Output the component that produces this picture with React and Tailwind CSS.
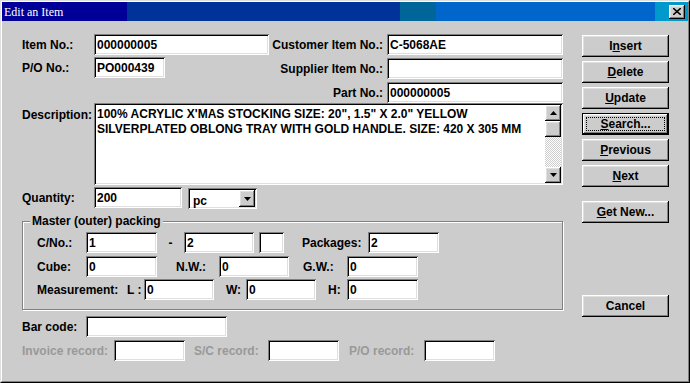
import React from 'react';

// Win95-style bevels, reused across controls
const SUNKEN = 'shadow-[inset_1px_1px_0_#808080,inset_-1px_-1px_0_#ffffff,inset_2px_2px_0_#000000,inset_-2px_-2px_0_#dfdfdf]';
const RAISED = 'shadow-[inset_-1px_-1px_0_#000000,inset_1px_1px_0_#ffffff,inset_-2px_-2px_0_#808080,inset_2px_2px_0_#dfdfdf]';

function Label({ w, children, className = '' }) {
  return (
    <span className={`shrink-0 text-[12px] font-bold leading-none whitespace-nowrap ${w} ${className}`}>
      {children}
    </span>
  );
}

function Field({ w, value = '' }) {
  return (
    <div className={`shrink-0 h-[21px] bg-white ${SUNKEN} flex items-center pl-[3px] text-[12px] font-bold leading-none text-black ${w}`}>
      {value}
    </div>
  );
}

function Arrow({ down }) {
  return (
    <svg width="7" height="4" viewBox="0 0 7 4" aria-hidden="true">
      <polygon points={down ? '0,0 7,0 3.5,4' : '0,4 7,4 3.5,0'} fill="#000" />
    </svg>
  );
}

function Button({ children, focused, className = '' }) {
  if (focused) {
    return (
      <div className={`h-[22px] w-[87px] border border-black bg-[#cccccc] ${className}`}>
        <div className={`h-full w-full ${RAISED} p-[3px] flex`}>
          <div className="flex-1 border border-dotted border-black flex items-center justify-center text-[12px] font-bold leading-none">
            {children}
          </div>
        </div>
      </div>
    );
  }
  return (
    <div className={`h-[22px] w-[87px] bg-[#cccccc] ${RAISED} flex items-center justify-center text-[12px] font-bold leading-none ${className}`}>
      {children}
    </div>
  );
}

export default function App() {
  return (
    <div className="w-[690px] h-[383px] bg-[#cccccc] text-black font-['Liberation_Sans',Arial,sans-serif] border border-[#dfdfdf] border-r-black border-b-black">
      <div className="h-full border border-white border-r-[#808080] border-b-[#808080] flex flex-col">
        {/* title bar */}
        <div className="h-[19px] flex shrink-0">
          <div className="w-[125px] bg-[#000099] flex items-center pl-[2px] text-white text-[12px] leading-none font-['Liberation_Serif','Times_New_Roman',serif]">
            Edit an Item
          </div>
          <div className="w-[273px] bg-[#003399]" />
          <div className="w-[36px] bg-[#006699]" />
          <div className="w-[219px] bg-[#0066cc]" />
          <div className="flex-1 bg-[#0099cc] flex items-center justify-end pr-[3px]">
            <div className={`w-[16px] h-[14px] bg-[#cccccc] ${RAISED} flex items-center justify-center`}>
              <svg width="8" height="7" viewBox="0 0 8 7" aria-hidden="true">
                <path d="M0 0L8 7M8 0L0 7" stroke="#000" strokeWidth="1.6" />
              </svg>
            </div>
          </div>
        </div>

        {/* body */}
        <div className="flex pt-[13px] pl-[20px]">
          <div className="w-[541px] flex flex-col">
            <div className="flex">
              <div className="w-[247px] flex flex-col gap-[2px]">
                <div className="flex items-center">
                  <Label w="w-[72px]">Item No.:</Label>
                  <Field w="w-[175px]" value="000000005" />
                </div>
                <div className="flex items-center">
                  <Label w="w-[72px]">P/O No.:</Label>
                  <Field w="w-[71px]" value="PO000439" />
                </div>
              </div>
              <div className="w-[294px] flex flex-col gap-[3px]">
                <div className="flex items-center">
                  <Label w="w-[118px]" className="text-right pr-[4px]">Customer Item No.:</Label>
                  <Field w="w-[176px]" value="C-5068AE" />
                </div>
                <div className="flex items-center">
                  <Label w="w-[118px]" className="text-right pr-[4px]">Supplier Item No.:</Label>
                  <Field w="w-[176px]" />
                </div>
                <div className="flex items-center">
                  <Label w="w-[118px]" className="text-right pr-[4px]">Part No.:</Label>
                  <Field w="w-[176px]" value="000000005" />
                </div>
              </div>
            </div>

            {/* description */}
            <div className="flex">
              <Label w="w-[72px]" className="pt-[6px]">Description:</Label>
              <div className={`w-[469px] h-[82px] bg-white ${SUNKEN} p-[2px] flex`}>
                <div className="flex-1 pl-[1px] pt-[2px] text-[12px] font-bold leading-[15px] whitespace-nowrap overflow-hidden">
                  <div>100% ACRYLIC X'MAS STOCKING SIZE: 20", 1.5" X 2.0" YELLOW</div>
                  <div>SILVERPLATED OBLONG TRAY WITH GOLD HANDLE. SIZE: 420 X 305 MM</div>
                </div>
                <div className="w-[16px] flex flex-col">
                  <div className={`h-[16px] bg-[#cccccc] ${RAISED} flex items-center justify-center`}>
                    <Arrow />
                  </div>
                  <div className={`h-[16px] bg-[#cccccc] ${RAISED}`} />
                  <div className="flex-1 bg-[repeating-conic-gradient(#ffffff_0_25%,#cccccc_0_50%)] bg-[length:2px_2px]" />
                  <div className={`h-[16px] bg-[#cccccc] ${RAISED} flex items-center justify-center`}>
                    <Arrow down />
                  </div>
                </div>
              </div>
            </div>

            {/* quantity */}
            <div className="flex items-start mt-[2px] h-[21px]">
              <div className="h-[21px] flex items-center">
                <Label w="w-[72px]">Quantity:</Label>
              </div>
              <Field w="w-[88px]" value="200" />
              <div className={`ml-[6px] mt-[1px] w-[69px] h-[21px] bg-white ${SUNKEN} p-[2px] flex`}>
                <div className="flex-1 pl-[3px] pt-[5px] text-[12px] font-bold leading-none">pc</div>
                <div className={`w-[16px] bg-[#cccccc] ${RAISED} flex items-center justify-center`}>
                  <Arrow down />
                </div>
              </div>
            </div>

            {/* master packing group */}
            <div className="relative mt-[13px] border border-[#808080] shadow-[inset_1px_1px_0_#ffffff,1px_1px_0_#ffffff] pt-[10px] pb-[9px] pl-[14px]">
              <span className="absolute left-[7px] top-[-8px] bg-[#cccccc] px-[2px] text-[12px] font-bold leading-[14px]">
                Master (outer) packing
              </span>
              <div className="flex items-center">
                <Label w="w-[49px]">C/No.:</Label>
                <Field w="w-[71px]" value="1" />
                <Label w="w-[27px]" className="text-center">-</Label>
                <Field w="w-[70px]" value="2" />
                <div className="ml-[5px]"><Field w="w-[25px]" /></div>
                <Label w="w-[66px]" className="ml-[18px]">Packages:</Label>
                <Field w="w-[71px]" value="2" />
              </div>
              <div className="flex items-center mt-[3px]">
                <Label w="w-[49px]">Cube:</Label>
                <Field w="w-[71px]" value="0" />
                <Label w="w-[43px]" className="ml-[19px]">N.W.:</Label>
                <Field w="w-[70px]" value="0" />
                <Label w="w-[44px]" className="ml-[14px]">G.W.:</Label>
                <Field w="w-[71px]" value="0" />
              </div>
              <div className="flex items-center mt-[2px]">
                <Label w="w-[90px]">Measurement:</Label>
                <Label w="w-[17px]">L :</Label>
                <Field w="w-[70px]" value="0" />
                <Label w="w-[20px]" className="ml-[12px]">W:</Label>
                <Field w="w-[70px]" value="0" />
                <Label w="w-[19px]" className="ml-[12px]">H:</Label>
                <Field w="w-[71px]" value="0" />
              </div>
            </div>

            {/* bar code & records */}
            <div className="flex items-center mt-[6px]">
              <Label w="w-[64px]">Bar code:</Label>
              <Field w="w-[141px]" />
            </div>
            <div className="flex items-center mt-[3px] text-[#999999]">
              <Label w="w-[92px]">Invoice record:</Label>
              <Field w="w-[71px]" />
              <Label w="w-[74px]" className="ml-[9px]">S/C record:</Label>
              <Field w="w-[71px]" />
              <Label w="w-[75px]" className="ml-[10px]">P/O record:</Label>
              <Field w="w-[71px]" />
            </div>
          </div>

          {/* buttons */}
          <div className="ml-[19px] w-[87px] pt-[1px] flex flex-col">
            <div className="flex flex-col gap-[4px]">
              <Button>I<span className="underline">n</span>sert</Button>
              <Button><span className="underline">D</span>elete</Button>
              <Button><span className="underline">U</span>pdate</Button>
              <Button focused><span className="underline">S</span>earch...</Button>
              <Button><span className="underline">P</span>revious</Button>
              <Button><span className="underline">N</span>ext</Button>
            </div>
            <Button className="mt-[14px]"><span className="underline">G</span>et New...</Button>
            <Button className="mt-[72px]">Cancel</Button>
          </div>
        </div>
      </div>
    </div>
  );
}
